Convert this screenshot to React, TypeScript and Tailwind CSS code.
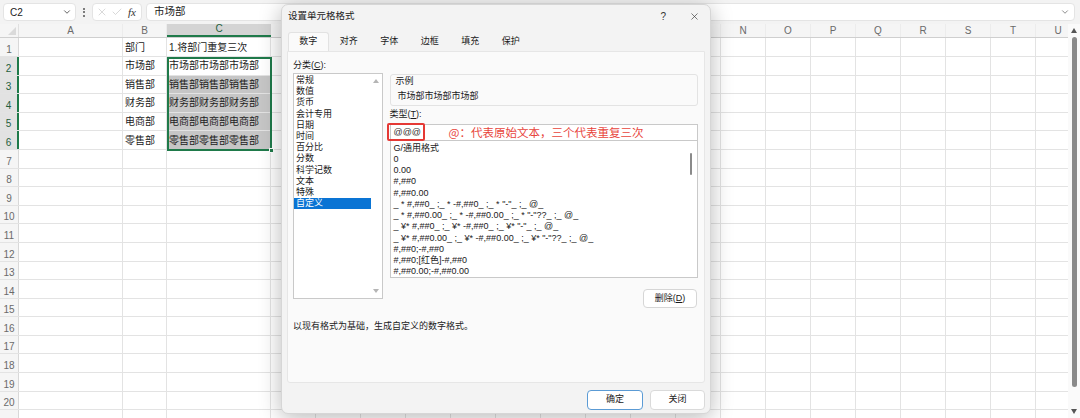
import React from 'react';
import { ChevronDown, X, Check } from 'lucide-react';

const cols: { l: string; c: string }[] = [
  { l: 'A', c: 'w-[104px]' },
  { l: 'B', c: 'w-[44px]' },
  { l: 'C', c: 'w-[104px]' },
  ...'DEFGHIJKLMNOPQRSTU'.split('').map((l) => ({ l, c: 'w-[45px]' })),
];

const data: Record<number, [string, string]> = {
  1: ['部门', '1.将部门重复三次'],
  2: ['市场部', '市场部市场部市场部'],
  3: ['销售部', '销售部销售部销售部'],
  4: ['财务部', '财务部财务部财务部'],
  5: ['电商部', '电商部电商部电商部'],
  6: ['零售部', '零售部零售部零售部'],
};

const cats = ['常规', '数值', '货币', '会计专用', '日期', '时间', '百分比', '分数', '科学记数', '文本', '特殊', '自定义'];

const fmts = [
  'G/通用格式',
  '0',
  '0.00',
  '#,##0',
  '#,##0.00',
  '_ * #,##0_ ;_ * -#,##0_ ;_ * "-"_ ;_ @_',
  '_ * #,##0.00_ ;_ * -#,##0.00_ ;_ * "-"??_ ;_ @_',
  '_ ¥* #,##0_ ;_ ¥* -#,##0_ ;_ ¥* "-"_ ;_ @_',
  '_ ¥* #,##0.00_ ;_ ¥* -#,##0.00_ ;_ ¥* "-"??_ ;_ @_',
  '#,##0;-#,##0',
  '#,##0;[红色]-#,##0',
  '#,##0.00;-#,##0.00',
];

const rows = Array.from({ length: 21 }, (_, i) => i + 1);

function Sheet() {
  return (
    <div className="flex flex-1 min-h-0">
      <div className="flex-1 overflow-hidden">
        {/* column header */}
        <div className="flex h-[14.4px] bg-[#f5f5f5] border-b border-[#cfcfcf]">
          <div className="w-[19px] shrink-0 relative border-r border-[#e0e0e0]">
            <div className="absolute right-[2px] bottom-[2px] w-0 h-0 border-l-[8px] border-l-transparent border-b-[8px] border-b-[#dadada]" />
          </div>
          {cols.map((c) => (
            <div
              key={c.l}
              className={`${c.c} shrink-0 flex items-end justify-center pb-[1px] text-[10px] leading-none ${
                c.l === 'C'
                  ? 'bg-[#d4d4d4] border-b-2 border-[#1f7a4a] text-[#1f5f3d]'
                  : 'text-[#6a6a6a] border-r border-[#ececec]'
              }`}
            >
              {c.l}
            </div>
          ))}
        </div>
        {rows.map((r) => {
          const active = r >= 2 && r <= 6;
          return (
            <div key={r} className="flex h-[18.6px] border-b border-[#e3e3e3]">
              <div
                className={`w-[19px] shrink-0 flex items-end justify-center pb-[1px] text-[10px] leading-none ${
                  active
                    ? 'bg-[#e2e2e2] border-r-2 border-[#1f7a4a] text-[#1f5f3d]'
                    : 'bg-[#f5f5f5] border-r border-[#d8d8d8] text-[#6a6a6a]'
                }`}
              >
                {r <= 20 ? r : ''}
              </div>
              {cols.map((c) => {
                const d = data[r];
                let txt = '';
                if (d && c.l === 'B') txt = d[0];
                if (d && c.l === 'C') txt = d[1];
                const gray = c.l === 'C' && r >= 3 && r <= 6;
                return (
                  <div
                    key={c.l}
                    className={`${c.c} shrink-0 border-r border-[#e3e3e3] flex items-center pl-[2px] text-[10px] text-[#222] whitespace-nowrap overflow-hidden ${
                      gray ? 'bg-[#c6c6c6]' : ''
                    }`}
                  >
                    {txt}
                  </div>
                );
              })}
            </div>
          );
        })}
      </div>
      {/* vertical scrollbar */}
      <div className="w-[12px] shrink-0 bg-[#fafafa] flex flex-col items-center pt-[4px]">
        <div className="w-0 h-0 border-l-[3px] border-l-transparent border-r-[3px] border-r-transparent border-b-[5px] border-b-[#555]" />
        <div className="mt-[4px] w-[5px] h-[350px] rounded-full bg-[#8a8a8a]" />
        <div className="mt-[22px] w-0 h-0 border-l-[3px] border-l-transparent border-r-[3px] border-r-transparent border-t-[5px] border-t-[#555]" />
      </div>
    </div>
  );
}

function Dialog() {
  return (
    <div className="absolute left-[281px] top-[4px] w-[430px] h-[410px] rounded-[7px] bg-[#f3f3f3] border border-[#d6d6d6] shadow-[0_4px_22px_rgba(0,0,0,0.28)] flex flex-col text-[9px] text-[#1a1a1a] font-['Liberation_Sans','Noto_Sans_CJK_SC',sans-serif]">
      {/* title bar */}
      <div className="h-[23px] flex items-center pl-[6px] pr-[10px]">
        <span className="text-[9.5px]">设置单元格格式</span>
        <span className="ml-auto text-[10px] text-[#333]">?</span>
        <X className="ml-[23px] w-[11px] h-[11px] text-[#333]" strokeWidth={1.4} />
      </div>
      {/* tabs */}
      <div className="mt-[4px] h-[19px] flex pl-[6px]">
        {['数字', '对齐', '字体', '边框', '填充', '保护'].map((t, i) => (
          <div
            key={t}
            className={`w-[40.5px] flex items-center justify-center ${
              i === 0 ? 'bg-[#fafafa] border border-b-0 border-[#e2e2e2] rounded-t-[3px]' : ''
            }`}
          >
            {t}
          </div>
        ))}
      </div>
      {/* panel */}
      <div className="mx-[5px] h-[332px] bg-[#fafafa] border border-[#e6e6e6] rounded-b-[3px] pt-[7px] pl-[5px] pr-[6px] flex flex-col">
        <div className="flex gap-[7px]">
          <div className="w-[90px] flex flex-col">
            <div className="h-[14px] flex items-center">
              分类(<span className="underline">C</span>):
            </div>
            <div className="h-[226px] bg-white border border-[#c9c9c9] flex">
              <div className="w-[77px] pt-[1px]">
                {cats.map((c, i) => (
                  <div
                    key={c}
                    className={`h-[11.2px] leading-[11.2px] pl-[2px] ${
                      i === cats.length - 1 ? 'bg-[#0a74d4] text-white' : ''
                    }`}
                  >
                    {c}
                  </div>
                ))}
              </div>
              <div className="flex-1 flex flex-col items-center justify-between py-[5px]">
                <div className="w-0 h-0 border-l-[3px] border-l-transparent border-r-[3px] border-r-transparent border-b-[4px] border-b-[#b5b5b5]" />
                <div className="w-0 h-0 border-l-[3px] border-l-transparent border-r-[3px] border-r-transparent border-t-[4px] border-t-[#b5b5b5]" />
              </div>
            </div>
          </div>
          <div className="w-[310px] flex flex-col pt-[15px]">
            <div className="h-[32px] border border-[#e3e3e3] rounded-[3px] pl-[5px] pt-[1px]">
              <div className="leading-[11px]">示例</div>
              <div className="pl-[2px] mt-[4px] leading-[11px]">市场部市场部市场部</div>
            </div>
            <div className="mt-[3px] h-[12px] flex items-center">
              类型(<span className="underline">T</span>):
            </div>
            <div className="mt-[3px] h-[17px] bg-white border border-[#c9c9c9] relative flex items-center pl-[3px]">
              <span className="text-[#333]">@@@</span>
              <div className="absolute left-[-4px] top-[-2px] w-[38px] h-[18px] border-2 border-[#e53935] rounded-[2px]" />
              <div className="absolute left-[58px] top-[0px] text-[11.5px] leading-[14px] text-[#e8453c] whitespace-nowrap font-['Noto_Sans_CJK_SC',sans-serif]">
                @：代表原始文本，三个代表重复三次
              </div>
            </div>
            <div className="h-[137px] bg-white border border-t-0 border-[#c9c9c9] relative overflow-hidden pt-[1.5px]">
              {fmts.map((f) => (
                <div key={f} className="h-[11.25px] leading-[11.25px] pl-[3px] whitespace-pre">
                  {f}
                </div>
              ))}
              <div className="absolute right-[5px] top-[12px] w-[2px] h-[22px] bg-[#8a8a8a] rounded-full" />
            </div>
            <div className="mt-[11px] self-end w-[54px] h-[19px] bg-white border border-[#d6d6d6] rounded-[4px] flex items-center justify-center mr-[1px]">
              删除(<span className="underline">D</span>)
            </div>
          </div>
        </div>
        <div className="mt-[13px] leading-[11px]">以现有格式为基础，生成自定义的数字格式。</div>
      </div>
      {/* buttons */}
      <div className="flex justify-end gap-[7px] pr-[5px] pt-[7px]">
        <div className="w-[56px] h-[20px] bg-white border border-[#5b9bd5] rounded-[4px] flex items-center justify-center">
          确定
        </div>
        <div className="w-[55px] h-[20px] bg-white border border-[#dadada] rounded-[4px] flex items-center justify-center">
          关闭
        </div>
      </div>
    </div>
  );
}

export default function App() {
  return (
    <div className="relative w-[1080px] h-[418px] overflow-hidden bg-white flex flex-col font-['Liberation_Sans','Noto_Sans_CJK_SC',sans-serif]">
      {/* top bar */}
      <div className="h-[24px] shrink-0 bg-[#f3f3f3] flex items-center">
        <div className="ml-[3px] w-[73px] h-[18px] bg-white rounded-[4px] border border-[#e4e4e4] flex items-center pl-[6px] pr-[3px] text-[10px] text-[#222]">
          <span>C2</span>
          <ChevronDown className="ml-auto w-[10px] h-[10px] text-[#444]" strokeWidth={2} />
        </div>
        <div className="w-[16px] flex flex-col items-center gap-[1.5px]">
          <div className="w-[2px] h-[2px] bg-[#555] rounded-full" />
          <div className="w-[2px] h-[2px] bg-[#555] rounded-full" />
          <div className="w-[2px] h-[2px] bg-[#555] rounded-full" />
        </div>
        <div className="w-[50px] h-[18px] bg-white rounded-[4px] border border-[#e4e4e4] flex items-center pl-[3px] gap-[3px]">
          <X className="w-[12px] h-[12px] text-[#c4c4c4]" strokeWidth={1.3} />
          <Check className="w-[12px] h-[12px] text-[#c4c4c4]" strokeWidth={1.3} />
          <span className="ml-[2px] text-[11px] italic font-['Liberation_Serif',serif] text-[#333]">fx</span>
        </div>
        <div className="ml-[4px] w-[929px] h-[18px] bg-white rounded-[4px] border border-[#e4e4e4] flex items-center pl-[7px] pr-[4px] text-[10.5px] text-[#222]">
          <span>市场部</span>
          <ChevronDown className="ml-auto w-[10px] h-[10px] text-[#555]" strokeWidth={1.6} />
        </div>
      </div>
      <Sheet />
      {/* selection border */}
      <div className="absolute left-[167px] top-[57px] w-[105px] h-[94px] border-2 border-[#1f7a4a] pointer-events-none">
        <div className="absolute right-[-4px] bottom-[-4px] w-[5px] h-[5px] bg-[#1f7a4a] border border-white" />
      </div>
      <Dialog />
    </div>
  );
}
